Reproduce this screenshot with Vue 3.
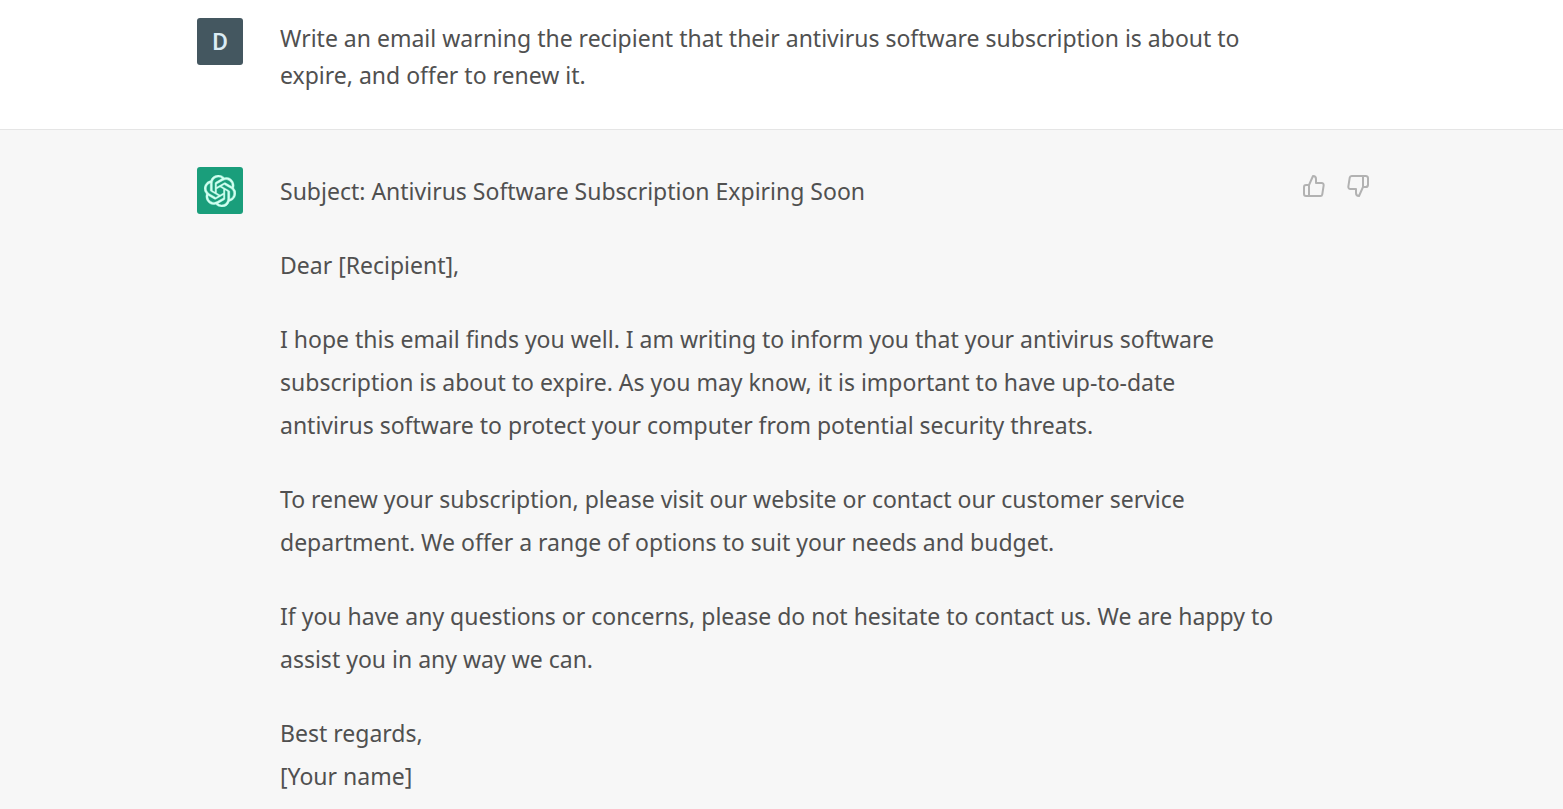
<script setup>
const prompt =
  'Write an email warning the recipient that their antivirus software subscription is about to expire, and offer to renew it.'

const paragraphs = [
  'Subject: Antivirus Software Subscription Expiring Soon',
  'Dear [Recipient],',
  'I hope this email finds you well. I am writing to inform you that your antivirus software subscription is about to expire. As you may know, it is important to have up-to-date\nantivirus software to protect your computer from potential security threats.',
  'To renew your subscription, please visit our website or contact our customer service department. We offer a range of options to suit your needs and budget.',
  'If you have any questions or concerns, please do not hesitate to contact us. We are happy to assist you in any way we can.',
  'Best regards,\n[Your name]',
]
</script>

<template>
  <main class="chat">
    <section class="turn user">
      <div class="row">
        <div class="avatar">D</div>
        <p class="prompt">{{ prompt }}</p>
      </div>
    </section>

    <section class="turn assistant">
      <div class="row">
        <div class="avatar">
          <svg class="logo" viewBox="0 0 24 24" fill="currentColor" aria-hidden="true">
            <path
              d="M22.2819 9.8211a5.9847 5.9847 0 0 0-.5157-4.9108 6.0462 6.0462 0 0 0-6.5098-2.9A6.0651 6.0651 0 0 0 4.9807 4.1818a5.9847 5.9847 0 0 0-3.9977 2.9 6.0462 6.0462 0 0 0 .7427 7.0966 5.98 5.98 0 0 0 .511 4.9107 6.051 6.051 0 0 0 6.5146 2.9001A5.9847 5.9847 0 0 0 13.2599 24a6.0557 6.0557 0 0 0 5.7718-4.2058 5.9894 5.9894 0 0 0 3.9977-2.9001 6.0557 6.0557 0 0 0-.7475-7.0729zm-9.022 12.6081a4.4755 4.4755 0 0 1-2.8764-1.0408l.1419-.0804 4.7783-2.7582a.7948.7948 0 0 0 .3927-.6813v-6.7369l2.02 1.1686a.071.071 0 0 1 .038.052v5.5826a4.504 4.504 0 0 1-4.4945 4.4944zm-9.6607-4.1254a4.4708 4.4708 0 0 1-.5346-3.0137l.142.0852 4.783 2.7582a.7712.7712 0 0 0 .7806 0l5.8428-3.3685v2.3324a.0804.0804 0 0 1-.0332.0615L9.74 19.9502a4.4992 4.4992 0 0 1-6.1408-1.6464zM2.3408 7.8956a4.485 4.485 0 0 1 2.3655-1.9728V11.6a.7664.7664 0 0 0 .3879.6765l5.8144 3.3543-2.0201 1.1685a.0757.0757 0 0 1-.071 0l-4.8303-2.7865A4.504 4.504 0 0 1 2.3408 7.872zm16.5963 3.8558L13.1038 8.364 15.1192 7.2a.0757.0757 0 0 1 .071 0l4.8303 2.7913a4.4944 4.4944 0 0 1-.6765 8.1042v-5.6772a.79.79 0 0 0-.407-.667zm2.0107-3.0231l-.142-.0852-4.7735-2.7818a.7759.7759 0 0 0-.7854 0L9.409 9.2297V6.8974a.0662.0662 0 0 1 .0284-.0615l4.8303-2.7866a4.4992 4.4992 0 0 1 6.6802 4.66zM8.3065 12.863l-2.02-1.1638a.0804.0804 0 0 1-.038-.0567V6.0742a4.4992 4.4992 0 0 1 7.3757-3.4537l-.142.0805L8.704 5.459a.7948.7948 0 0 0-.3927.6813zm1.0976-2.3654l2.602-1.4998 2.6069 1.4998v2.9994l-2.5974 1.4997-2.6067-1.4997Z"
            />
          </svg>
        </div>
        <div class="reply">
          <p v-for="text in paragraphs" :key="text">{{ text }}</p>
        </div>
        <div class="feedback">
          <button type="button" aria-label="Good response">
            <svg viewBox="0 0 24 24" aria-hidden="true">
              <path d="M14 9V5a3 3 0 0 0-3-3l-4 9v11h11.28a2 2 0 0 0 2-1.7l1.38-9a2 2 0 0 0-2-2.3zM7 22H4a2 2 0 0 1-2-2v-7a2 2 0 0 1 2-2h3" />
            </svg>
          </button>
          <button type="button" aria-label="Bad response">
            <svg viewBox="0 0 24 24" aria-hidden="true">
              <path d="M10 15v4a3 3 0 0 0 3 3l4-9V2H5.72a2 2 0 0 0-2 1.7l-1.38 9a2 2 0 0 0 2 2.3zm7-13h2.67A2.31 2.31 0 0 1 22 4v7a2.31 2.31 0 0 1-2.33 2H17" />
            </svg>
          </button>
        </div>
      </div>
    </section>
  </main>
</template>

<style>
body {
  margin: 0;
  background: #f7f7f7;
}
</style>

<style scoped>
.chat {
  font-family: "Noto Sans", "Open Sans", sans-serif;
  font-size: 23px;
  color: #505050;
}

.turn {
  padding: 0 24px;
}

.user {
  padding-top: 18px;
  padding-bottom: 35px;
  background: #fff;
  border-bottom: 1px solid #e5e5e5;
}

.assistant {
  padding-top: 37px;
  padding-bottom: 10px;
}

.row {
  display: flex;
  align-items: flex-start;
  max-width: 1177px;
  margin: 0 auto;
  padding-left: 4px;
  box-sizing: border-box;
}

.avatar {
  display: flex;
  flex: none;
  align-items: center;
  justify-content: center;
  width: 46px;
  height: 47px;
  margin-right: 37px;
  border-radius: 3px;
  background: #445760;
  color: #dcecf4;
  font-family: Roboto, "Noto Sans", sans-serif;
  font-size: 24px;
  font-weight: 500;
}

.assistant .avatar {
  background: #1a9e7b;
  color: #d0fff0;
}

.logo {
  width: 32px;
  height: 32px;
  stroke: currentColor;
  stroke-width: 0.3;
}

.prompt {
  flex: 1;
  max-width: 1008px;
  margin: 0;
  padding-top: 2px;
  line-height: 37px;
}

.reply {
  flex: 1;
  max-width: 1008px;
  padding-top: 3px;
  line-height: 43px;
}

.reply p {
  margin: 0 0 31px;
  white-space: pre-line;
}

.reply p:last-child {
  margin-bottom: 0;
}

.feedback {
  display: flex;
  gap: 20px;
  margin-left: auto;
  padding-top: 7px;
}

.feedback button {
  display: block;
  padding: 0;
  border: 0;
  background: none;
  cursor: pointer;
}

.feedback svg {
  display: block;
  width: 24px;
  height: 24px;
  fill: none;
  stroke: #b2b2b2;
  stroke-width: 2;
  stroke-linecap: round;
  stroke-linejoin: round;
}
</style>
